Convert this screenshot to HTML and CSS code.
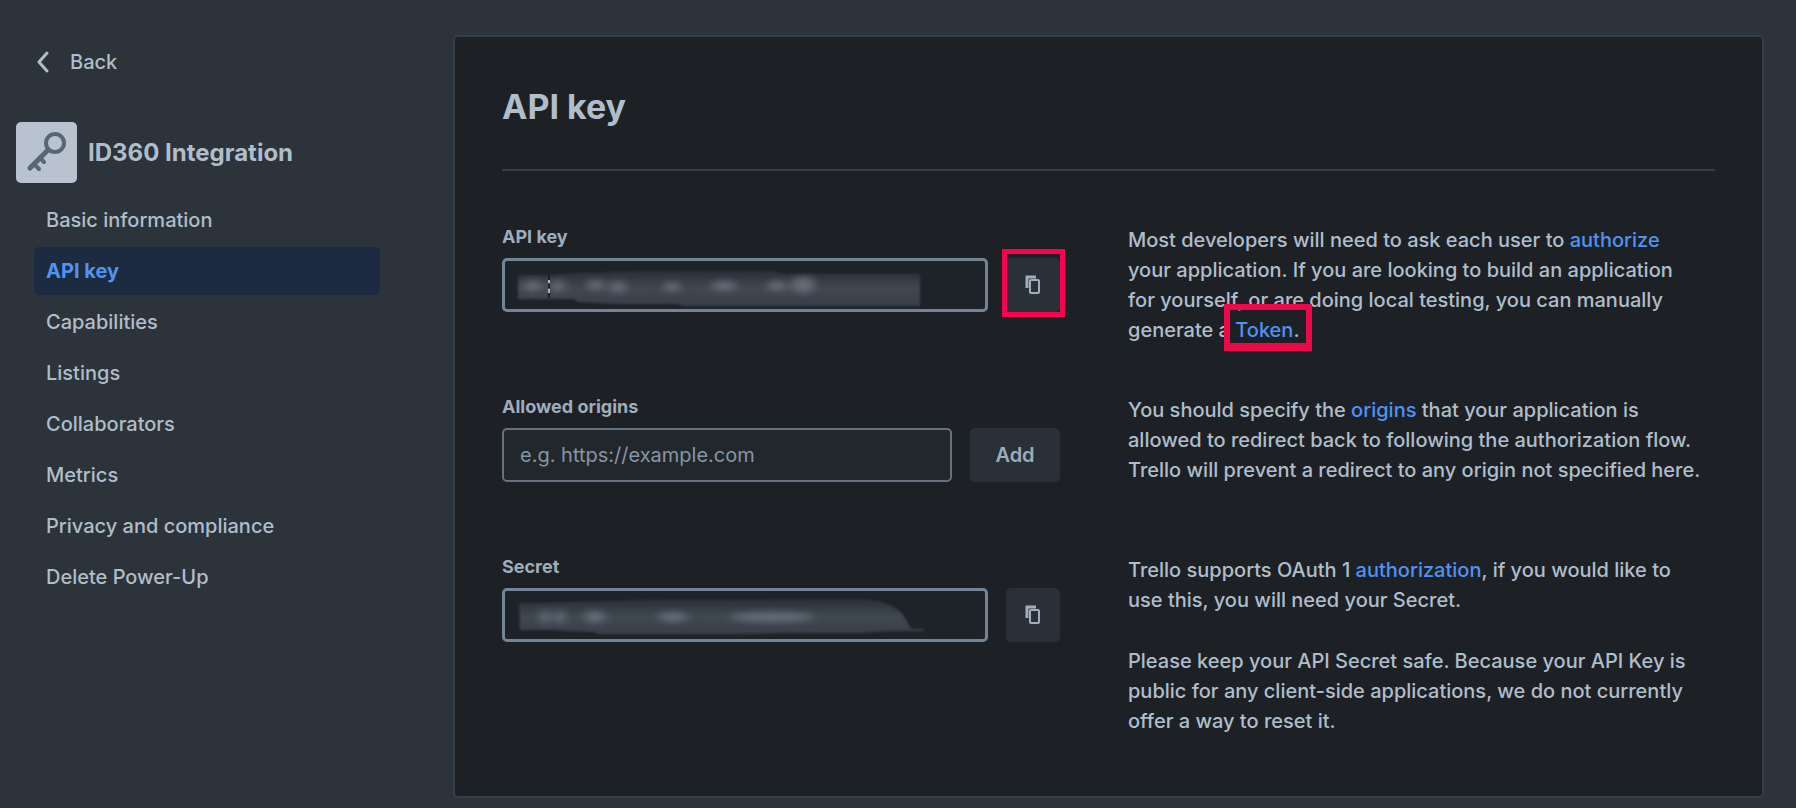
FILE: index.html
```html
<!DOCTYPE html>
<html lang="en">
<head>
  <meta charset="UTF-8">
  <meta name="viewport" content="width=device-width, initial-scale=1.0">
  <title>API key - ID360 Integration</title>
  <link rel="stylesheet" href="styles.css">
</head>
<body>
  <aside class="sidebar">
    <a class="back" href="#">
      <svg class="back-icon" width="14" height="22" viewBox="0 0 14 22" fill="none" stroke="currentColor" stroke-width="3" stroke-linecap="round" stroke-linejoin="round"><path d="M11 2L3 11l8 9"/></svg>
      Back
    </a>
    <div class="app">
      <svg class="app-icon" viewBox="0 0 61 61" fill="none" stroke="#596773" stroke-linecap="round" stroke-linejoin="round">
        <circle cx="39" cy="21" r="9" stroke-width="4"/>
        <path d="M32 28L14 46" stroke-width="5"/>
        <path d="M18 42l5 5M24 36l4 4" stroke-width="4"/>
      </svg>
      <h2 class="app-name">ID360 Integration</h2>
    </div>
    <nav>
      <ul class="menu">
        <li><a href="#">Basic information</a></li>
        <li><a class="active" href="#" aria-current="page">API key</a></li>
        <li><a href="#">Capabilities</a></li>
        <li><a href="#">Listings</a></li>
        <li><a href="#">Collaborators</a></li>
        <li><a href="#">Metrics</a></li>
        <li><a href="#">Privacy and compliance</a></li>
        <li><a href="#">Delete Power-Up</a></li>
      </ul>
    </nav>
  </aside>

  <main class="card">
    <h1>API key</h1>

    <section class="row">
      <div class="field">
        <label for="api-key">API key</label>
        <div class="controls">
          <div class="secret">
            <input id="api-key" class="strong" type="text" readonly>
            <svg class="smudge" viewBox="0 0 486 54" preserveAspectRatio="none" aria-hidden="true">
              <defs>
                <filter id="soft" x="-30%" y="-80%" width="160%" height="260%"><feGaussianBlur stdDeviation="5 3"/></filter>
                <filter id="edge" x="-5%" y="-10%" width="110%" height="120%"><feGaussianBlur stdDeviation="1"/></filter>
                <linearGradient id="fade" x1="0" y1="0" x2="0" y2="1">
                  <stop offset="0" stop-color="#292f37"/>
                  <stop offset=".5" stop-color="#404751"/>
                  <stop offset="1" stop-color="#383f49"/>
                </linearGradient>
              </defs>
              <path d="M16 17H46L76 15 140 13H270L284 16H418V48H180L176 46H118L76 44 72 41H16z" fill="url(#fade)" filter="url(#edge)"/>
              <g fill="#646c77" filter="url(#soft)">
                <ellipse cx="31" cy="28" rx="10" ry="5"/>
                <ellipse cx="56" cy="28" rx="7" ry="6"/>
                <ellipse cx="94" cy="27" rx="9" ry="5"/>
                <ellipse cx="116" cy="29" rx="8" ry="6"/>
                <ellipse cx="170" cy="29" rx="8" ry="5"/>
                <ellipse cx="222" cy="28" rx="13" ry="5"/>
                <ellipse cx="275" cy="28" rx="10" ry="5"/>
                <ellipse cx="301" cy="27" rx="12" ry="8"/>
              </g>
              <path d="M47 17v5M47 26v4M47 35v5" stroke="#1d2125" stroke-width="2"/>
              <path d="M47 22v3M47 31v4" stroke="#a9b4c0" stroke-width="2"/>
            </svg>
          </div>
          <button class="btn copy marked" type="button" aria-label="Copy API key">
            <svg width="16" height="20" viewBox="0 0 16 20" fill="none" stroke="currentColor"><path d="M2 13V2h9" stroke-width="3"/><rect x="5" y="5" width="9" height="13" rx="1" stroke-width="2"/></svg>
          </button>
        </div>
      </div>
      <div class="help">
        <p>Most developers will need to ask each user to <a href="#">authorize</a><br>
        your application. If you are looking to build an application<br>
        for yourself, or are doing local testing, you can manually<br>
        generate a <span class="token-mark"><a href="#">Token</a>.</span></p>
      </div>
    </section>

    <section class="row">
      <div class="field">
        <label for="origin">Allowed origins</label>
        <div class="controls">
          <input id="origin" type="text" placeholder="e.g. https://example.com">
          <button class="btn add" type="button">Add</button>
        </div>
      </div>
      <div class="help">
        <p>You should specify the <a href="#">origins</a> that your application is allowed to redirect back to following the authorization flow. Trello will prevent a redirect to any origin not specified here.</p>
      </div>
    </section>

    <section class="row">
      <div class="field">
        <label for="secret">Secret</label>
        <div class="controls">
          <div class="secret">
            <input id="secret" class="strong" type="text" readonly>
            <svg class="smudge" viewBox="0 0 486 54" preserveAspectRatio="none" aria-hidden="true">
              <path d="M17 15L70 14 130 12 310 11 360 11Q398 13 406 36L410 41H422V43H388L360 45H290L230 46H96L90 44 50 42H18z" fill="url(#fade)" filter="url(#edge)"/>
              <g fill="#646c77" filter="url(#soft)">
                <ellipse cx="43" cy="29" rx="5" ry="7"/>
                <ellipse cx="58" cy="29" rx="5" ry="7"/>
                <ellipse cx="93" cy="29" rx="11" ry="6"/>
                <ellipse cx="171" cy="29" rx="15" ry="5"/>
                <ellipse cx="270" cy="29" rx="42" ry="5"/>
              </g>
            </svg>
          </div>
          <button class="btn copy" type="button" aria-label="Copy secret">
            <svg width="16" height="20" viewBox="0 0 16 20" fill="none" stroke="currentColor"><path d="M2 13V2h9" stroke-width="3"/><rect x="5" y="5" width="9" height="13" rx="1" stroke-width="2"/></svg>
          </button>
        </div>
      </div>
      <div class="help">
        <p>Trello supports OAuth 1 <a href="#">authorization</a>, if you would like to<br>
        use this, you will need your Secret.</p>
        <p>Please keep your API Secret safe. Because your API Key is public for any client-side applications, we do not currently offer a way to reset it.</p>
      </div>
    </section>
  </main>
</body>
</html>
```

FILE: styles.css
```css
* {
  box-sizing: border-box;
}
body {
  display: flex;
  align-items: flex-start;
  gap: 73px;
  margin: 0;
  padding: 35px 32px 8px 16px;
  background-color: #2c333a;
  color: #b0bdcb;
  font-family: Inter, "Liberation Sans", sans-serif;
  font-size: 20px;
  line-height: 30px;
}
a {
  color: #5093f2;
  text-decoration: none;
}
h1, h2, p, ul {
  margin: 0;
  padding: 0;
}

/* Sidebar */
.sidebar {
  flex: 0 0 364px;
}
.back {
  display: inline-flex;
  align-items: center;
  gap: 20px;
  margin: 12px 0 0 20px;
  color: inherit;
  font-weight: 500;
}
.app {
  display: flex;
  align-items: center;
  gap: 11px;
  margin-top: 41px;
}
.app-icon {
  width: 61px;
  height: 61px;
  border-radius: 5px;
  background-color: #b9c3d0;
}
.app-name {
  font-size: 24px;
  font-weight: 700;
}
.menu {
  display: flex;
  flex-direction: column;
  gap: 3px;
  margin: 13px 0 0 18px;
  list-style: none;
}
.menu a {
  display: block;
  padding: 9px 12px;
  border-radius: 5px;
  color: inherit;
  font-weight: 500;
}
.menu .active {
  background-color: #1c2b41;
  color: #5093f2;
  font-weight: 700;
}

/* Main panel */
.card {
  flex: 1;
  padding: 47px 47px 60px;
  border: 2px solid #363e47;
  border-radius: 5px;
  background-color: #1d2125;
}
h1 {
  padding-bottom: 40px;
  margin-bottom: 54px;
  border-bottom: 2px solid #363e47;
  font-size: 34px;
  line-height: 45px;
  font-weight: 700;
}
.row {
  display: grid;
  grid-template-columns: 558fr 587fr;
  gap: 68px;
}
.row + .row {
  margin-top: 50px;
}
.field {
  padding-bottom: 23px;
}
label {
  display: block;
  margin-bottom: 9px;
  color: #9fadbc;
  font-size: 18px;
  line-height: 24px;
  font-weight: 700;
}
.controls {
  display: flex;
  gap: 18px;
}
.secret {
  position: relative;
  flex: 1;
}
input {
  flex: 1;
  width: 100%;
  min-width: 0;
  height: 54px;
  padding: 0 16px;
  border: 2px solid #66727f;
  border-radius: 5px;
  background-color: #22272b;
  color: inherit;
  font: inherit;
}
input::placeholder {
  color: #8696a7;
  opacity: 1;
}
.strong {
  border: 3px solid #738496;
  background-color: #1e2329;
}
.smudge {
  position: absolute;
  inset: 0;
  width: 100%;
  height: 100%;
  pointer-events: none;
}
.btn {
  position: relative;
  display: flex;
  align-items: center;
  justify-content: center;
  height: 54px;
  padding: 0;
  border: none;
  border-radius: 5px;
  background-color: #2a3037;
  color: #9fadbc;
  font: inherit;
  font-weight: 600;
  cursor: pointer;
}
.copy {
  width: 54px;
}
.add {
  width: 90px;
}
.help {
  font-weight: 500;
}
.help p + p {
  margin-top: 31px;
}

/* Red callout frames */
.marked::after {
  content: "";
  position: absolute;
  inset: -9px -5px -5px -4px;
  border: 5px solid #ff0050;
}
.token-mark {
  position: relative;
}
.token-mark::after {
  content: "";
  position: absolute;
  inset: -14px -13px -9px -11px;
  border: 6px solid #ee0a4a;
  border-bottom-width: 8px;
  pointer-events: none;
}
```
